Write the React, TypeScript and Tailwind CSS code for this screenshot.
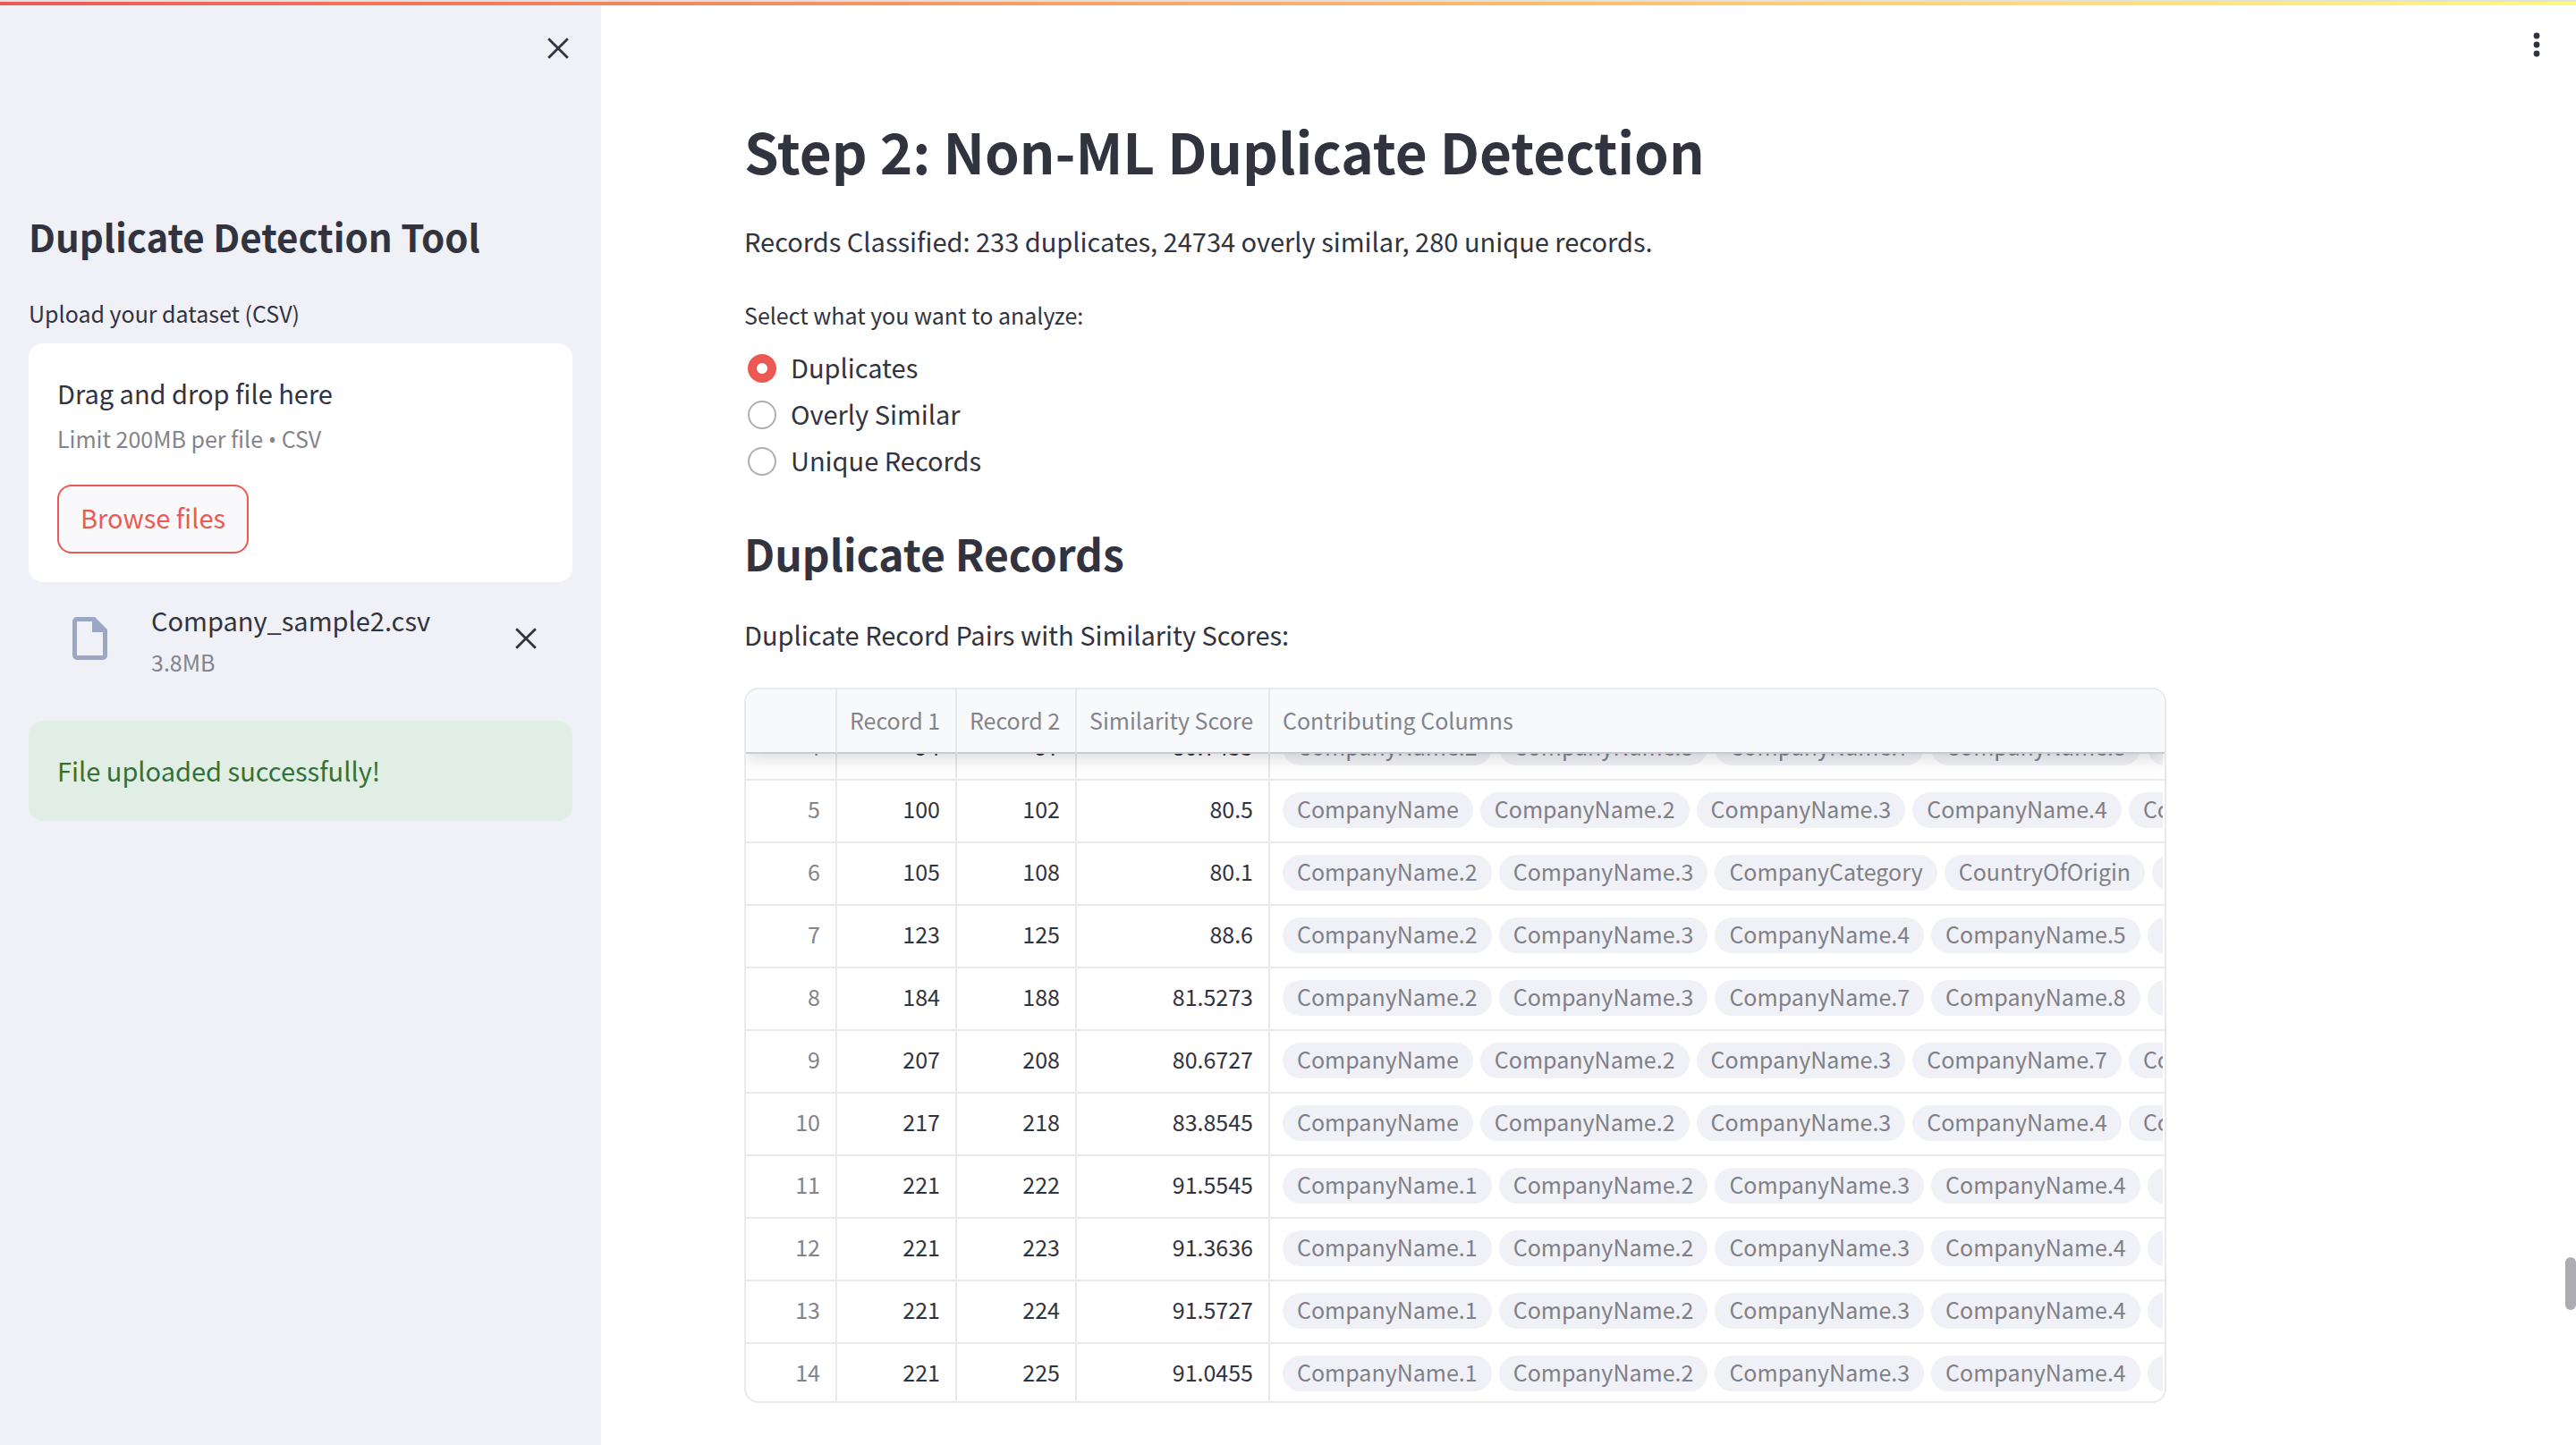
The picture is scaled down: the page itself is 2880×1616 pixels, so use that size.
import { useLayoutEffect, useRef, useState } from "react";

const rows: [number, number, number, string, string[]][] = [
  [4, 94, 97, "80.7455", ["CompanyName.2", "CompanyName.3", "CompanyName.7", "CompanyName.8", "CompanyName.9"]],
  [5, 100, 102, "80.5", ["CompanyName", "CompanyName.2", "CompanyName.3", "CompanyName.4", "CompanyName.5"]],
  [6, 105, 108, "80.1", ["CompanyName.2", "CompanyName.3", "CompanyCategory", "CountryOfOrigin", "CompanyStatus"]],
  [7, 123, 125, "88.6", ["CompanyName.2", "CompanyName.3", "CompanyName.4", "CompanyName.5", "CompanyName.7"]],
  [8, 184, 188, "81.5273", ["CompanyName.2", "CompanyName.3", "CompanyName.7", "CompanyName.8", "CompanyName.9"]],
  [9, 207, 208, "80.6727", ["CompanyName", "CompanyName.2", "CompanyName.3", "CompanyName.7", "CompanyName.8"]],
  [10, 217, 218, "83.8545", ["CompanyName", "CompanyName.2", "CompanyName.3", "CompanyName.4", "CompanyName.5"]],
  [11, 221, 222, "91.5545", ["CompanyName.1", "CompanyName.2", "CompanyName.3", "CompanyName.4", "CompanyName.5"]],
  [12, 221, 223, "91.3636", ["CompanyName.1", "CompanyName.2", "CompanyName.3", "CompanyName.4", "CompanyName.5"]],
  [13, 221, 224, "91.5727", ["CompanyName.1", "CompanyName.2", "CompanyName.3", "CompanyName.4", "CompanyName.5"]],
  [14, 221, 225, "91.0455", ["CompanyName.1", "CompanyName.2", "CompanyName.3", "CompanyName.4", "CompanyName.5"]],
];

const options = ["Duplicates", "Overly Similar", "Unique Records"];

function CloseIcon() {
  return (
    <svg viewBox="0 0 24 24" className="size-6" fill="none" stroke="currentColor" strokeWidth="2.8">
      <path d="M1.2 1.2 22.8 22.8M22.8 1.2 1.2 22.8" />
    </svg>
  );
}

function FileIcon() {
  return (
    <svg viewBox="0 0 40 48" className="h-12 w-10" fill="#9ba7c4">
      <path
        fillRule="evenodd"
        d="M5 0h20l14 14v29a5 5 0 0 1-5 5H5a5 5 0 0 1-5-5V5a5 5 0 0 1 5-5Zm0 5v38h29V17H22V5Z"
      />
    </svg>
  );
}

function Sidebar() {
  return (
    <aside className="flex w-[672px] shrink-0 flex-col bg-[#f0f1f6] px-8">
      <div className="flex justify-end px-1 pt-9">
        <button type="button" aria-label="Close sidebar">
          <CloseIcon />
        </button>
      </div>
      <h2 className="mt-[169px] text-[42px] leading-[58px] font-bold">Duplicate Detection Tool</h2>
      <label htmlFor="dataset" className="mt-9 text-[25px] leading-[42px]">
        Upload your dataset (CSV)
      </label>
      <section className="mt-[13px] rounded-2xl bg-white px-8 pt-[31px] pb-8">
        <p className="text-[29px] leading-[48px]">Drag and drop file here</p>
        <p className="mt-[6px] text-[25px] leading-[42px] text-[#83848b]">
          Limit 200MB per file <span className="font-['Open_Sans',sans-serif]">•</span> CSV
        </p>
        <button
          id="dataset"
          type="button"
          className="mt-[30px] flex h-[77px] items-center rounded-2xl border-2 border-[#ec5953] bg-[#f9f9fb] px-6 pb-1 text-[29px] leading-none text-[#ec5953]"
        >
          Browse files
        </button>
      </section>
      <div className="mt-4 flex items-center pr-10 pl-[49px]">
        <FileIcon />
        <div className="ml-12 flex-1">
          <p className="text-[29px] leading-[52px]">Company_sample2.csv</p>
          <p className="text-[25px] leading-[42px] text-[#83848b]">3.8MB</p>
        </div>
        <button type="button" aria-label="Remove file">
          <CloseIcon />
        </button>
      </div>
      <div role="alert" className="mt-[45px] rounded-2xl bg-[#e1eee6] px-8 pt-[30px] pb-8 text-[29px] leading-[50px] text-[#337135]">
        File uploaded successfully!
      </div>
    </aside>
  );
}

function RecordTable() {
  const scroller = useRef<HTMLDivElement>(null);
  useLayoutEffect(() => {
    if (scroller.current) scroller.current.scrollTop = 40;
  }, []);

  const head = "h-[72px] border-b-2 border-[#e9e9eb] border-b-[#cacad0] bg-[#f8f9fb] px-[14px] pb-[2px] font-normal whitespace-nowrap";
  const cell = "h-[70px] border-r-2 border-b-2 border-[#e9e9eb] pr-[17px] pl-4 pb-[6px] text-right";
  return (
    <div
      ref={scroller}
      className="mt-[35px] h-[800px] w-[1590px] max-w-full overflow-x-hidden overflow-y-auto rounded-2xl border-2 border-[#e9e9eb] [scrollbar-width:none]"
    >
      <table className="w-full table-fixed border-separate border-spacing-0 text-[25px] leading-[40px]">
        <colgroup>
          <col className="w-[102px]" />
          <col className="w-[134px]" />
          <col className="w-[134px]" />
          <col className="w-[216px]" />
          <col />
        </colgroup>
        <thead className="sticky top-0 z-10 text-[#83848b] shadow-[0_4px_20px_rgba(0,0,0,0.16)]">
          <tr>
            <th scope="col" aria-label="Index" className={head + " border-r-2"} />
            <th scope="col" className={head + " border-r-2 text-left"}>Record 1</th>
            <th scope="col" className={head + " border-r-2 text-left"}>Record 2</th>
            <th scope="col" className={head + " border-r-2 text-left"}>Similarity Score</th>
            <th scope="col" className={head + " text-left"}>Contributing Columns</th>
          </tr>
        </thead>
        <tbody>
          {rows.map(([index, first, second, score, columns]) => (
            <tr key={index}>
              <td className={cell + " text-[#83848b]"}>{index}</td>
              <td className={cell}>{first}</td>
              <td className={cell}>{second}</td>
              <td className={cell}>{score}</td>
              <td className="h-[70px] border-b-2 border-[#e9e9eb] pr-[2px] pb-[2px] pl-[14px]">
                <div className="flex gap-2 overflow-hidden text-[#7f8087]">
                  {columns.map((name) => (
                    <span key={name} className="h-10 shrink-0 rounded-full bg-[#f0f1f6] px-4 leading-9">
                      {name}
                    </span>
                  ))}
                </div>
              </td>
            </tr>
          ))}
        </tbody>
      </table>
    </div>
  );
}

export default function App() {
  const [selected, setSelected] = useState(options[0]);
  return (
    <div className="relative flex h-screen flex-col overflow-hidden bg-white font-['Noto_Sans_CJK_SC','Noto_Sans',sans-serif] text-[#31333f]">
      <div className="h-[2px] shrink-0 bg-[#e0e0e0]" />
      <div className="h-1 shrink-0 bg-linear-to-r from-[#ec5953] to-[#fffb80]" />
      <div className="flex min-h-0 flex-1">
        <Sidebar />
        <main className="min-w-0 flex-1 px-40 pt-[116px]">
          <h1 className="text-[62px] leading-[92px] font-bold">Step 2: Non-ML Duplicate Detection</h1>
          <p className="mt-[30px] text-[29px] leading-[50px]">
            Records Classified: 233 duplicates, 24734 overly similar, 280 unique records.
          </p>
          <fieldset className="mt-[37px]">
            <legend className="text-[25px] leading-[42px]">Select what you want to analyze:</legend>
            <div className="mt-[13px] flex flex-col items-start">
              {options.map((option) => (
                <label key={option} className="flex h-[52px] items-center gap-4 pl-1 text-[29px] leading-[48px]">
                  <input
                    type="radio"
                    name="analysis"
                    checked={selected === option}
                    onChange={() => setSelected(option)}
                    className="size-8 appearance-none rounded-full border-2 border-[#adaeb3] bg-white checked:border-[10px] checked:border-[#ec5953]"
                  />
                  <span className="pb-1">{option}</span>
                </label>
              ))}
            </div>
          </fieldset>
          <h2 className="mt-[42px] text-[48px] leading-[68px] font-bold">Duplicate Records</h2>
          <p className="mt-8 text-[29px] leading-[50px]">Duplicate Record Pairs with Similarity Scores:</p>
          <RecordTable />
        </main>
      </div>
      <button type="button" aria-label="Main menu" className="absolute top-[30px] right-6 flex h-10 w-10 items-center justify-center">
        <svg viewBox="0 0 40 40" className="size-10" fill="#31333f">
          <circle cx="20" cy="10" r="3.4" />
          <circle cx="20" cy="20" r="3.4" />
          <circle cx="20" cy="30" r="3.4" />
        </svg>
      </button>
      <div className="absolute top-[1406px] right-0 h-[59px] w-3 rounded-full bg-[#adacb3]" />
    </div>
  );
}
